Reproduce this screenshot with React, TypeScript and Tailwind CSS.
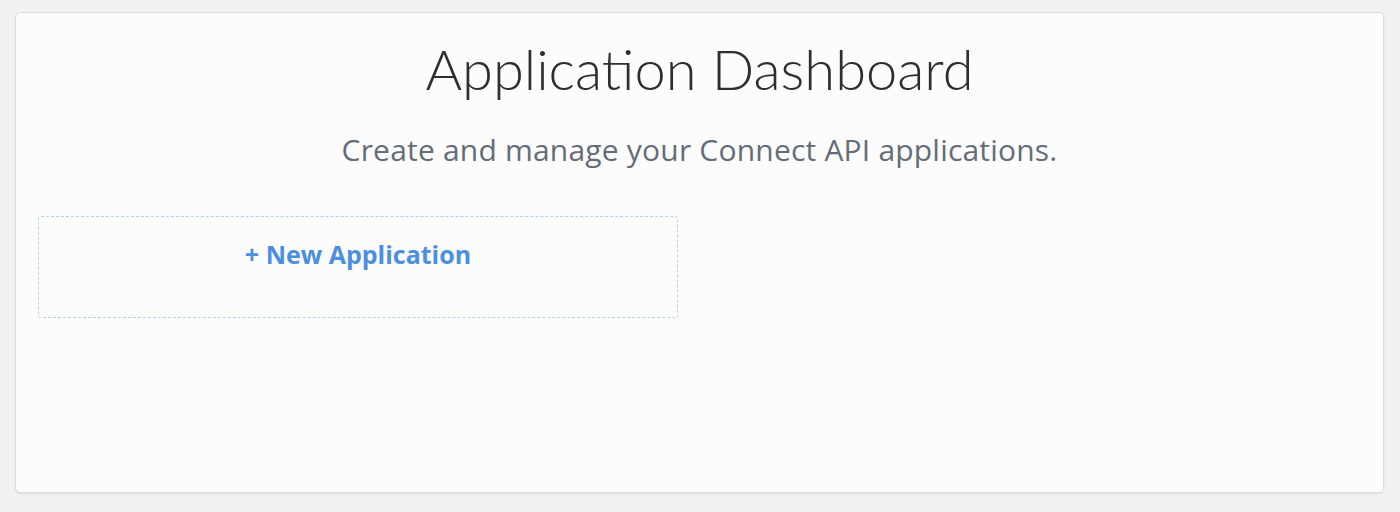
export default function App() {
  return (
    <div className="min-h-[512px] bg-[#f0f1f0] pt-[12px] pl-[15px] pr-[16px] pb-[19px]" style={{ fontFamily: '"Open Sans", Lato, sans-serif' }}>
      <div className="h-[481px] rounded-[5px] border border-[#dcdedc] bg-[#fcfcfc] shadow-[0_1px_2px_rgba(0,0,0,0.08)] px-[22px]">
        <h1 className="pt-[28px] text-center font-['Lato',sans-serif] text-[56px] font-light leading-[56px] text-[#2e2e2e]">
          Application Dashboard
        </h1>
        <p className="mt-[37px] text-center text-[30px] leading-[32px] tracking-[0.2px] text-[#646c78]">
          Create and manage your Connect API applications.
        </p>
        <div className="mt-[50px] flex h-[102px] w-[640px] justify-center rounded-[3px] border border-dashed border-[#b6d2f3] pt-[22px]">
          <span className="text-[25px] font-bold leading-[30px] text-[#4a8fe0]">+ New Application</span>
        </div>
      </div>
    </div>
  )
}
